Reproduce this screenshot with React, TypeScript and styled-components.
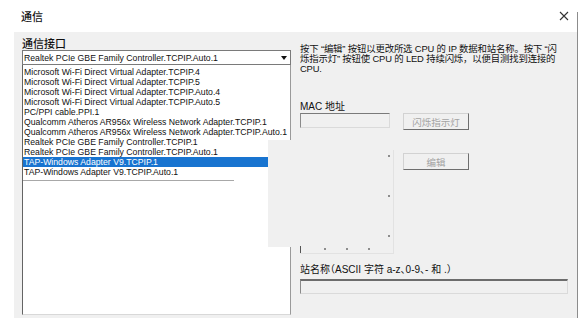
import styled, { createGlobalStyle } from 'styled-components';

const GlobalStyle = createGlobalStyle`
  html, body {
    margin: 0;
    padding: 0;
    background: #ffffff;
  }
  body {
    font-family: "Liberation Sans", "Noto Sans CJK SC", sans-serif;
    color: #111111;
  }
`;

const Window = styled.div`
  width: 578px;
  height: 318px;
  display: flex;
  flex-direction: column;
  overflow: hidden;
`;

const TitleBar = styled.div`
  position: relative;
  height: 32px;
  flex: none;
  display: flex;
  align-items: center;
  justify-content: space-between;
  padding: 0 6px 0 21px;
  box-sizing: border-box;

  &::after {
    content: '';
    position: absolute;
    right: 0;
    top: 12px;
    bottom: 0;
    width: 1px;
    background: #8c8c8c;
  }
`;

const Title = styled.span`
  font-family: "Noto Sans CJK SC", sans-serif;
  font-size: 11px;
  line-height: 13px;
  font-weight: 500;
`;

const CloseButton = styled.span`
  width: 12px;
  height: 12px;
  display: flex;
  align-items: center;
  justify-content: center;
  margin-right: 2px;
`;

const Body = styled.div`
  flex: 1;
  margin-left: 14px;
  background: #f0f0f0;
  border-right: 1px solid #8c8c8c;
  display: flex;
  gap: 9px;
  padding: 5px 0 0 8px;
  box-sizing: border-box;
`;

const LeftCol = styled.div`
  width: 269px;
  display: flex;
  flex-direction: column;
`;

const GroupLabel = styled.div`
  font-family: "Noto Sans CJK SC", sans-serif;
  font-size: 11px;
  line-height: 13px;
  font-weight: 500;
`;

const Combo = styled.div`
  height: 15px;
  box-sizing: border-box;
  border: 1px solid #7a7a7a;
  background: #fff;
  display: flex;
  align-items: center;
  justify-content: space-between;
  padding: 0 3px 0 1px;
  font-size: 8.7px;
  white-space: nowrap;
`;

const Arrow = styled.span`
  width: 0;
  height: 0;
  border-left: 3px solid transparent;
  border-right: 3px solid transparent;
  border-top: 4px solid #111;
  margin-top: 1px;
`;

const List = styled.div`
  position: relative;
  height: 250px;
  box-sizing: border-box;
  background: #fff;
  border-left: 1px solid #646464;
  border-right: 1px solid #9a9a9a;
  border-bottom: 1px solid #d8d8d8;
  padding-top: 2px;
`;

const Item = styled.div<{ $selected?: boolean }>`
  height: 10px;
  line-height: 10px;
  padding-left: 1px;
  font-size: 8.7px;
  white-space: nowrap;
  overflow: hidden;
  background: ${p => (p.$selected ? '#1874d0' : 'transparent')};
  color: ${p => (p.$selected ? '#ffffff' : '#111111')};
`;

const ListRule = styled.div`
  width: 211px;
  height: 1px;
  margin-top: 3px;
  background: #a8a8a8;
`;

// stale repaint of the dialog over the dropped list
const RepaintPatch = styled.div`
  position: absolute;
  left: 245px;
  top: 75px;
  right: -2px;
  height: 107px;
  background: #f0f0f0;
`;

const RightCol = styled.div`
  width: 268px;
  display: flex;
  flex-direction: column;
`;

const Description = styled.div`
  margin-top: 7px;
  font-size: 9.4px;
  line-height: 10px;
  letter-spacing: -0.15px;
  white-space: nowrap;
`;

const FieldLabel = styled.div<{ $top: number }>`
  margin-top: ${p => p.$top}px;
  font-size: 10px;
  line-height: 12px;
  white-space: nowrap;
  font-feature-settings: "halt";
`;

const Row = styled.div<{ $top?: number; $gap: number }>`
  display: flex;
  align-items: flex-start;
  gap: ${p => p.$gap}px;
  margin-top: ${p => p.$top ?? 0}px;
`;

const TextField = styled.div<{ $width: number; $heavy?: boolean }>`
  width: ${p => p.$width}px;
  height: 15px;
  box-sizing: border-box;
  background: #f0f0f0;
  border-top: ${p => (p.$heavy ? '2px solid #6c6c6c' : '1px solid #7a7a7a')};
  border-left: 1px solid #8a8a8a;
  border-right: 1px solid #dadada;
  border-bottom: 1px solid #dadada;
`;

const Button = styled.div<{ $top?: number }>`
  width: 66px;
  height: 17px;
  margin-top: ${p => p.$top ?? 0}px;
  box-sizing: border-box;
  background: #f0f0f0;
  border-top: 1px solid #d2d2d2;
  border-left: 1px solid #d2d2d2;
  border-right: 1px solid #6e6e6e;
  border-bottom: 1px solid #6e6e6e;
  display: flex;
  align-items: center;
  justify-content: center;
  font-size: 9.5px;
  color: #a3a3a3;
`;

const AddressGhost = styled.div`
  width: 94px;
  height: 104px;
  box-sizing: border-box;
  border-right: 1px solid #e2e2e2;
  border-bottom: 1px solid #e2e2e2;
  display: flex;
  flex-direction: column;
  padding: 5px 3px 0 0;
`;

const DotSlot = styled.div<{ $h: number }>`
  height: ${p => p.$h}px;
  display: flex;
  justify-content: flex-end;
`;

const Dot = styled.span`
  width: 2px;
  height: 2px;
  background: #8d8d8d;
`;

const OctetRow = styled.div`
  height: 8px;
  display: flex;
  align-items: center;
  gap: 20px;
`;

const Caret = styled.span`
  width: 1px;
  height: 7px;
  background: #555;
  margin-right: 3px;
`;

const entries = [
  'Microsoft Wi-Fi Direct Virtual Adapter.TCPIP.4',
  'Microsoft Wi-Fi Direct Virtual Adapter.TCPIP.5',
  'Microsoft Wi-Fi Direct Virtual Adapter.TCPIP.Auto.4',
  'Microsoft Wi-Fi Direct Virtual Adapter.TCPIP.Auto.5',
  'PC/PPI cable.PPI.1',
  'Qualcomm Atheros AR956x Wireless Network Adapter.TCPIP.1',
  'Qualcomm Atheros AR956x Wireless Network Adapter.TCPIP.Auto.1',
  'Realtek PCIe GBE Family Controller.TCPIP.1',
  'Realtek PCIe GBE Family Controller.TCPIP.Auto.1',
  'TAP-Windows Adapter V9.TCPIP.1',
  'TAP-Windows Adapter V9.TCPIP.Auto.1',
];

export default function App() {
  return (
    <>
      <GlobalStyle />
      <Window>
        <TitleBar>
          <Title>通信</Title>
          <CloseButton>
            <svg width="10" height="10" viewBox="0 0 10 10">
              <path d="M1 1L9 9M9 1L1 9" stroke="#333" strokeWidth="1.1" />
            </svg>
          </CloseButton>
        </TitleBar>
        <Body>
          <LeftCol>
            <GroupLabel>通信接口</GroupLabel>
            <Combo>
              <span>Realtek PCIe GBE Family Controller.TCPIP.Auto.1</span>
              <Arrow />
            </Combo>
            <List>
              {entries.map((e, i) => (
                <Item key={e} $selected={i === 9}>
                  {e}
                </Item>
              ))}
              <ListRule />
              <RepaintPatch />
            </List>
          </LeftCol>
          <RightCol>
            <Description>
              <div>按下 “编辑” 按钮以更改所选 CPU 的 IP 数据和站名称。按下 “闪</div>
              <div>烁指示灯” 按钮使 CPU 的 LED 持续闪烁，以便目测找到连接的</div>
              <div>CPU.</div>
            </Description>
            <FieldLabel $top={27}>MAC 地址</FieldLabel>
            <Row $gap={13}>
              <TextField $width={90} />
              <Button>闪烁指示灯</Button>
            </Row>
            <Row $top={20} $gap={9}>
              <AddressGhost>
                <DotSlot $h={40}>
                  <Dot />
                </DotSlot>
                <DotSlot $h={41}>
                  <Dot />
                </DotSlot>
                <DotSlot $h={10}>
                  <Dot />
                </DotSlot>
                <OctetRow>
                  <Caret />
                  <Dot />
                  <Dot />
                  <Dot />
                </OctetRow>
              </AddressGhost>
              <Button $top={3}>编辑</Button>
            </Row>
            <FieldLabel $top={10}>站名称（ASCII 字符 a-z、0-9、- 和 .）</FieldLabel>
            <Row $top={3} $gap={0}>
              <TextField $width={268} $heavy />
            </Row>
          </RightCol>
        </Body>
      </Window>
    </>
  );
}
